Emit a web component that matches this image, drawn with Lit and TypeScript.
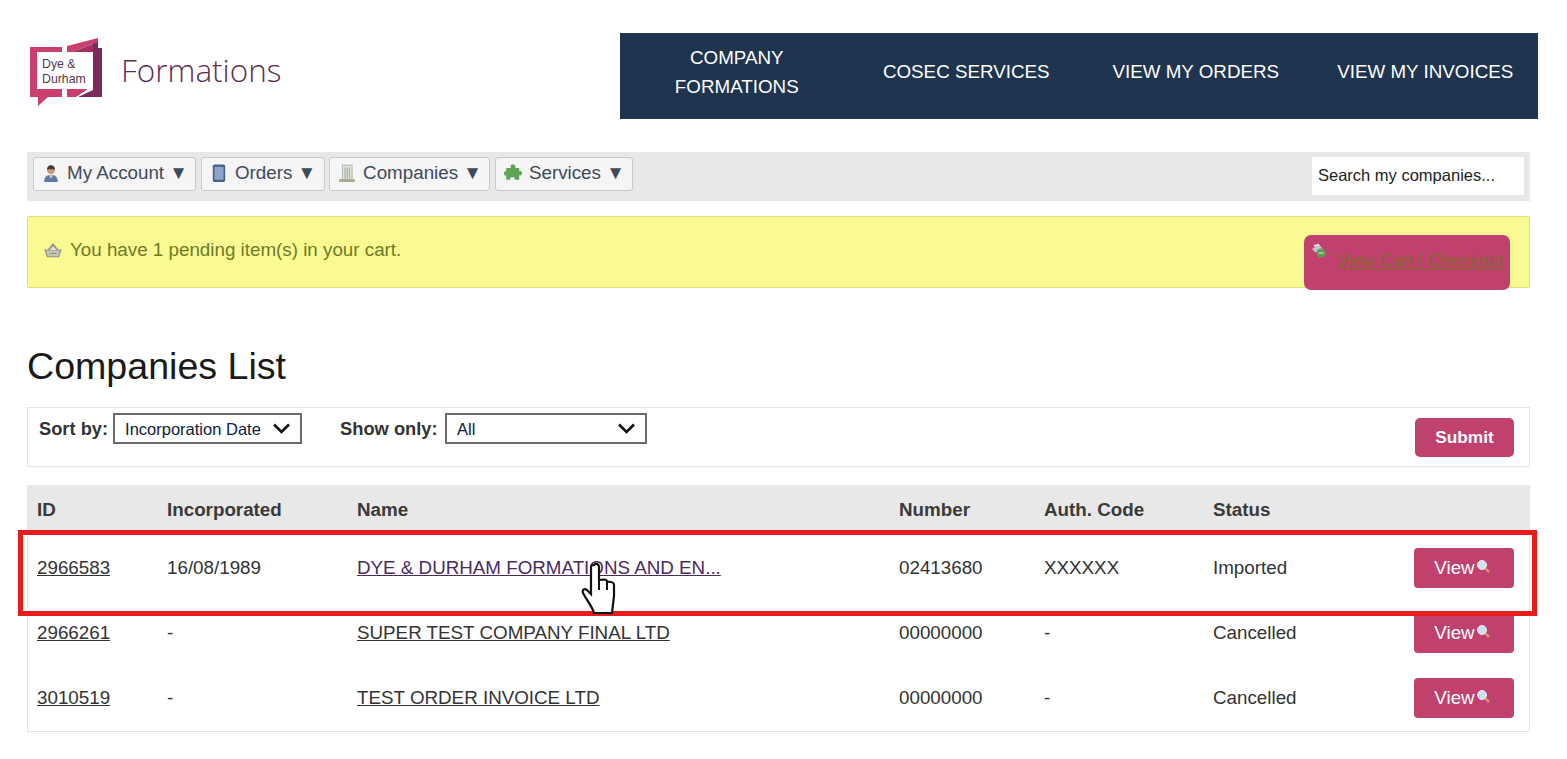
import { LitElement, html, css, svg } from "lit";
import { customElement } from "lit/decorators.js";

const rows = [
  { id: "2966583", inc: "16/08/1989", name: "DYE & DURHAM FORMATIONS AND EN...", num: "02413680", code: "XXXXXX", status: "Imported" },
  { id: "2966261", inc: "-", name: "SUPER TEST COMPANY FINAL LTD", num: "00000000", code: "-", status: "Cancelled" },
  { id: "3010519", inc: "-", name: "TEST ORDER INVOICE LTD", num: "00000000", code: "-", status: "Cancelled" },
];

const userIcon = svg`<path d="M2 16c0-4 1.500-6.500 6-6.500s6 2.500 6 6.500z" fill="#5f78a6"/><path d="M6 10l2 3 2-3z" fill="#d8c8b8"/><circle cx="8" cy="5.500" r="3.400" fill="#c99a78"/><path d="M4.500 5c0-3 2-4 3.500-4s3.500 1 3.500 4c-2-.500-5-.500-7 0z" fill="#4a3a34"/>`;
const bookIcon = svg`<rect x="2.500" y="0.500" width="11" height="15.500" rx="1.500" fill="#46608e"/><rect x="4" y="2.500" width="8" height="11.500" fill="#8ca3cc"/>`;
const buildingIcon = svg`<rect x="4" y="1" width="8.500" height="13" fill="#dfe4dc" stroke="#b7bdb2"/><path d="M6.200 3v10M8.200 3v10M10.200 3v10" stroke="#a8b2a8"/><rect x="1" y="13.500" width="14" height="2.500" fill="#a7ac90"/>`;
const puzzleIcon = svg`<path d="M6 1.500c0-1.500 4-1.500 4 0v2h3.500v3c1.500-.500 2.500 0 2.500 1.500s-1 2.500-2.500 2v4H9.500c.500-1.500-.500-2.500-2-2.500s-2.500 1-2 2.500H2v-4c-1.500.500-2 0-2-1.500S.500 6 2 6.500V3.500h4z" fill="#5fa356"/>`;
const cartIcon = svg`<path d="M1 8h14l-2 6H3z" fill="#c7c5b4" stroke="#8f8f86"/><path d="M4 8l4-5 4 5" fill="#e6e3cc" stroke="#8f8f86" stroke-width="1.500"/><path d="M5 11h6" stroke="#8f8f86"/>`;
const checkoutIcon = svg`<path d="M1 6l7-4.500 3.500 4-7 4z" fill="#c9bfd6"/><path d="M3 3l5-1.500" stroke="#eee" stroke-width="1.500"/><circle cx="10" cy="10" r="4.500" fill="#5f9c54"/><path d="M7.500 10h5" stroke="#dfeadb"/>`;
const lensIcon = svg`<path d="M8 8l5 5" stroke="#d8a060" stroke-width="2.400"/><circle cx="6" cy="6" r="4.500" fill="#cfe0ee" stroke="#e6eef4"/>`;
const chevron = svg`<path d="M1.500 1.500l7.500 7.500 7.500-7.500" fill="none" stroke="#111" stroke-width="2.600"/>`;

@customElement("app-root")
export class AppRoot extends LitElement {
  static styles = css`
    :host { display: block; position: relative; height: 759px; overflow: hidden; background: #fff; font-family: "Liberation Sans", Arial, sans-serif; font-size: 18.800px; color: #2b2b2b; }
    .top { display: flex; justify-content: space-between; align-items: flex-start; padding: 33px 29px 0 30px; height: 119px; box-sizing: border-box; }
    .brand { display: flex; align-items: center; gap: 19px; margin-top: 5px; }
    .logo { position: relative; width: 72px; height: 69px; flex: none; }
    .logo svg { display: block; }
    .logo span { position: absolute; left: 12px; top: 19px; font-size: 12.300px; line-height: 15px; color: #5b3550; white-space: nowrap; }
    .word { font-family: "Open Sans", sans-serif; font-weight: 300; font-size: 31.500px; color: #5d3052; margin-top: -7px; }
    .nav { display: grid; grid-template-columns: repeat(4, 229.500px); height: 86px; background: #1f344e; color: #fff; }
    .nav div { display: flex; align-items: center; justify-content: center; text-align: center; line-height: 29px; padding: 0 0 9px 4px; box-sizing: border-box; }
    .main { padding: 0 37px 0 27px; }
    .toolbar { display: flex; justify-content: space-between; height: 49px; margin-top: 33px; padding: 5px 6px 0; box-sizing: border-box; background: #e8e8e8; }
    .menus { display: flex; gap: 4.500px; }
    .menu { display: flex; align-items: center; gap: 7px; height: 34px; padding: 0 7.500px 2px 8px; box-sizing: border-box; background: #f5f5f5; border: 1px solid #c8c8c8; border-radius: 3px; color: #3f4a5a; }
    .menu svg, .msg svg { flex: none; }
    .search { display: flex; align-items: center; width: 212px; height: 38px; padding: 0 0 2px 6px; box-sizing: border-box; background: #fff; color: #222; font-size: 16.500px; }
    .alert { display: flex; justify-content: space-between; align-items: flex-start; height: 72px; margin-top: 15px; padding-right: 19px; box-sizing: border-box; background: #fafa92; border: 1px solid #dfe07a; border-radius: 2px; color: #6f7a28; }
    .msg { display: flex; align-items: center; gap: 8px; margin: 22px 0 0 16px; }
    .checkout { display: flex; align-items: flex-start; width: 206px; height: 55px; margin-top: 18px; padding: 8px 0 0 7px; box-sizing: border-box; flex: none; background: #c0406e; border-radius: 7px; color: #86692a; font-size: 17.700px; }
    .checkout a { margin: 8px 0 0 10px; color: inherit; text-decoration: underline; white-space: nowrap; }
    h1 { margin: 40px 0 0; height: 79px; font-size: 37.600px; font-weight: 400; line-height: 76px; color: #1a1a1a; }
    .filters { display: flex; align-items: flex-start; height: 60px; padding: 5px 15px 0 11px; box-sizing: border-box; background: #fff; border: 1px solid #e4e4e4; }
    .field { display: flex; align-items: center; gap: 5px; height: 31px; margin-right: 38px; font-weight: 700; color: #333; font-size: 18.300px; }
    .field + .field { gap: 7.500px; }
    .select { display: flex; align-items: center; justify-content: space-between; height: 31px; padding: 2px 9px 0 10px; box-sizing: border-box; background: #fff; border: 2px solid #6b6b6b; font-weight: 400; font-size: 16.500px; color: #0d1b3a; }
    .select svg { margin-top: -2px; }
    .select.sort { width: 189px; }
    .select.show { width: 202px; }
    .sub { display: flex; align-items: center; justify-content: center; width: 99px; height: 39px; margin: 5px 0 0 auto; background: #c0406e; border-radius: 5px; color: #fff; font-weight: 700; font-size: 17.300px; }
    .table { margin-top: 18px; border: 1px solid #e4e4e4; border-top: none; height: 247px; box-sizing: border-box; }
    .grid { display: grid; grid-template-columns: 130px 190px 542px 145px 169px 1fr 100px; align-items: center; padding: 0 15px 0 9px; }
    .head { height: 50px; background: #e8e8e8; font-weight: 700; color: #3a3a3a; box-sizing: border-box; }
    .row { height: 65px; color: #333; }
    .row a { color: inherit; text-decoration: underline; }
    .row a.first { color: #4b2a5e; }
    .view { display: flex; align-items: center; justify-content: center; height: 40px; padding-right: 4px; box-sizing: border-box; background: #c0406e; border-radius: 4px; color: #fff; }
    .view svg { margin: -4px 0 0 1px; }
    .mark { position: absolute; left: 18px; top: 530px; width: 1519px; height: 86px; box-sizing: border-box; border: 5px solid #e81c1c; }
    .hand { position: absolute; left: 580px; top: 562px; }
  `;

  private icon(content: unknown, size = 18) {
    return html`<svg width=${size} height=${size} viewBox="0 0 16 16">${content}</svg>`;
  }

  render() {
    return html`
      <div class="top">
        <div class="brand">
          <div class="logo">
            <svg width="72" height="69" viewBox="30 38 72 69">
              <path d="M30 47H62V52H37V89H62V97H48L38 106V97H30Z" fill="#c93f70"/>
              <path d="M78 52L93 47V42L98 41V48H102V97H78L93 90V52Z" fill="#7c2a5c"/>
              <path d="M67 46L98 38V42L72 52H67Z" fill="#c93f70"/>
              <path d="M72 52L93 44V52Z" fill="#a4305f"/>
              <path d="M67 89H88L76 97H67Z" fill="#c93f70"/>
            </svg>
            <span>Dye &amp;<br />Durham</span>
          </div>
          <div class="word">Formations</div>
        </div>
        <nav class="nav">
          <div>COMPANY<br />FORMATIONS</div>
          <div>COSEC SERVICES</div>
          <div>VIEW MY ORDERS</div>
          <div>VIEW MY INVOICES</div>
        </nav>
      </div>
      <div class="main">
        <div class="toolbar">
          <div class="menus">
            <div class="menu">${this.icon(userIcon)}My Account ▼</div>
            <div class="menu">${this.icon(bookIcon)}Orders ▼</div>
            <div class="menu">${this.icon(buildingIcon)}Companies ▼</div>
            <div class="menu">${this.icon(puzzleIcon)}Services ▼</div>
          </div>
          <div class="search">Search my companies...</div>
        </div>
        <div class="alert">
          <div class="msg">${this.icon(cartIcon)}You have 1 pending item(s) in your cart.</div>
          <div class="checkout">${this.icon(checkoutIcon, 16)}<a>View Cart / Checkout</a></div>
        </div>
        <h1>Companies List</h1>
        <div class="filters">
          <div class="field">Sort by:
            <div class="select sort">Incorporation Date<svg width="19" height="11" viewBox="0 0 18 11">${chevron}</svg></div>
          </div>
          <div class="field">Show only:
            <div class="select show">All<svg width="19" height="11" viewBox="0 0 18 11">${chevron}</svg></div>
          </div>
          <div class="sub">Submit</div>
        </div>
        <div class="table">
          <div class="grid head">
            <div>ID</div><div>Incorporated</div><div>Name</div><div>Number</div><div>Auth. Code</div><div>Status</div><div></div>
          </div>
          ${rows.map(
            (r, i) => html`<div class="grid row">
              <div><a>${r.id}</a></div>
              <div>${r.inc}</div>
              <div><a class=${i === 0 ? "first" : ""}>${r.name}</a></div>
              <div>${r.num}</div>
              <div>${r.code}</div>
              <div>${r.status}</div>
              <div class="view">View<svg width="14" height="14" viewBox="0 0 14 14">${lensIcon}</svg></div>
            </div>`
          )}
        </div>
      </div>
      <div class="mark"></div>
      <svg class="hand" width="38" height="52" viewBox="0 0 38 52">
        <path d="M14 3c2-2 5-1 5 2v13l5-.500c2 0 3 1 3 2l4 .500c2 0 3 2 3 3v11l-2 17H14c-1-5-8-14-11-20-1-3 1-5 4-3l4 4V5c0-1 1-2 3-2z" fill="#fff" stroke="#111" stroke-width="2.200"/>
        <path d="M19 18v10M27 20v8" stroke="#111" stroke-width="2"/>
      </svg>
    `;
  }
}
